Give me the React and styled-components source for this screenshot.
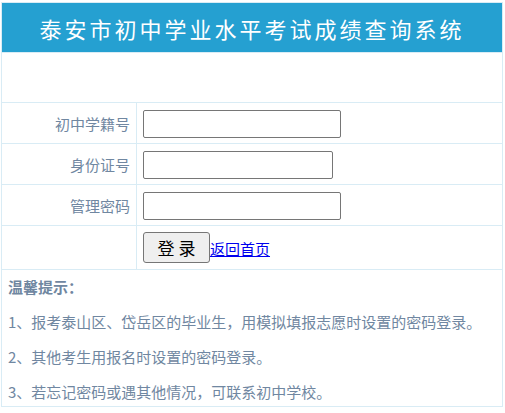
import styled, { createGlobalStyle } from "styled-components";

const GlobalStyle = createGlobalStyle`
    html, body {
        margin: 0;
        padding: 0;
        background: #ffffff;
    }
    body {
        font-family: "Noto Sans CJK SC", "Noto Sans", sans-serif;
    }
`;

const fields = [
    { label: "初中学籍号", width: 198, type: "text" },
    { label: "身份证号", width: 190, type: "text" },
    { label: "管理密码", width: 198, type: "password" }
];

const tips = [
    "1、报考泰山区、岱岳区的毕业生，用模拟填报志愿时设置的密码登录。",
    "2、其他考生用报名时设置的密码登录。",
    "3、若忘记密码或遇其他情况，可联系初中学校。"
];

export default function App() {
    return (
        <>
            <GlobalStyle />
            <Panel>
                <Header>
                    <Title>泰安市初中学业水平考试成绩查询系统</Title>
                </Header>
                <Blank />
                {fields.map((f) => (
                    <FormRow key={f.label}>
                        <Label>{f.label}</Label>
                        <Field>
                            <Input type={f.type} $w={f.width} />
                        </Field>
                    </FormRow>
                ))}
                <FormRow $tall>
                    <Label />
                    <Field $baseline>
                        <LoginBtn type="button">登 录</LoginBtn>
                        <BackLink href="#">返回首页</BackLink>
                    </Field>
                </FormRow>
                <Tips>
                    <TipTitle>温馨提示：</TipTitle>
                    {tips.map((t) => (
                        <TipLine key={t}>{t}</TipLine>
                    ))}
                </Tips>
            </Panel>
        </>
    );
}

const Panel = styled.div`
    box-sizing: border-box;
    width: 502px;
    margin: 2px 0 0 1px;
    border: 1px solid #d9ecf5;
    color: #7087a1;
`;

const Header = styled.div`
    height: 49px;
    display: flex;
    align-items: center;
    justify-content: center;
    background: #25a0d1;
    border-bottom: 1px solid #d9ecf5;
`;

const Title = styled.span`
    color: #ffffff;
    font-size: 22px;
    line-height: 30px;
    letter-spacing: 3px;
    white-space: nowrap;
`;

const Blank = styled.div`
    height: 49px;
    border-bottom: 1px solid #d9ecf5;
`;

const FormRow = styled.div`
    display: grid;
    grid-template-columns: 135px 1fr;
    height: ${(p) => (p.$tall ? 43 : 40)}px;
    border-bottom: 1px solid #d9ecf5;
`;

const Label = styled.div`
    display: flex;
    align-items: center;
    justify-content: flex-end;
    padding-right: 6px;
    border-right: 1px solid #d9ecf5;
    font-size: 15px;
`;

const Field = styled.div`
    display: flex;
    align-items: ${(p) => (p.$baseline ? "baseline" : "center")};
    padding: ${(p) => (p.$baseline ? "6px 0 0 6px" : "0 0 0 6px")};
`;

const Input = styled.input`
    box-sizing: border-box;
    width: ${(p) => p.$w}px;
    height: 28px;
    margin: 1px 0 0;
    border: 1px solid #767676;
    border-radius: 2px;
    font-size: 15px;
    padding: 1px 4px;
`;

const LoginBtn = styled.button`
    box-sizing: border-box;
    width: 67px;
    height: 31px;
    padding: 0;
    background: #efefef;
    border: 1px solid #767676;
    border-radius: 3px;
    color: #000000;
    font-family: "Noto Sans CJK SC", sans-serif;
    font-size: 17px;
`;

const BackLink = styled.a`
    color: #0000ee;
    font-size: 15px;
    text-decoration: underline;
`;

const Tips = styled.div`
    display: flex;
    flex-direction: column;
    gap: 15px;
    padding: 7px 6px 4px;
    font-size: 15px;
    line-height: 20px;
`;

const TipTitle = styled.div`
    font-weight: bold;
`;

const TipLine = styled.div``;
